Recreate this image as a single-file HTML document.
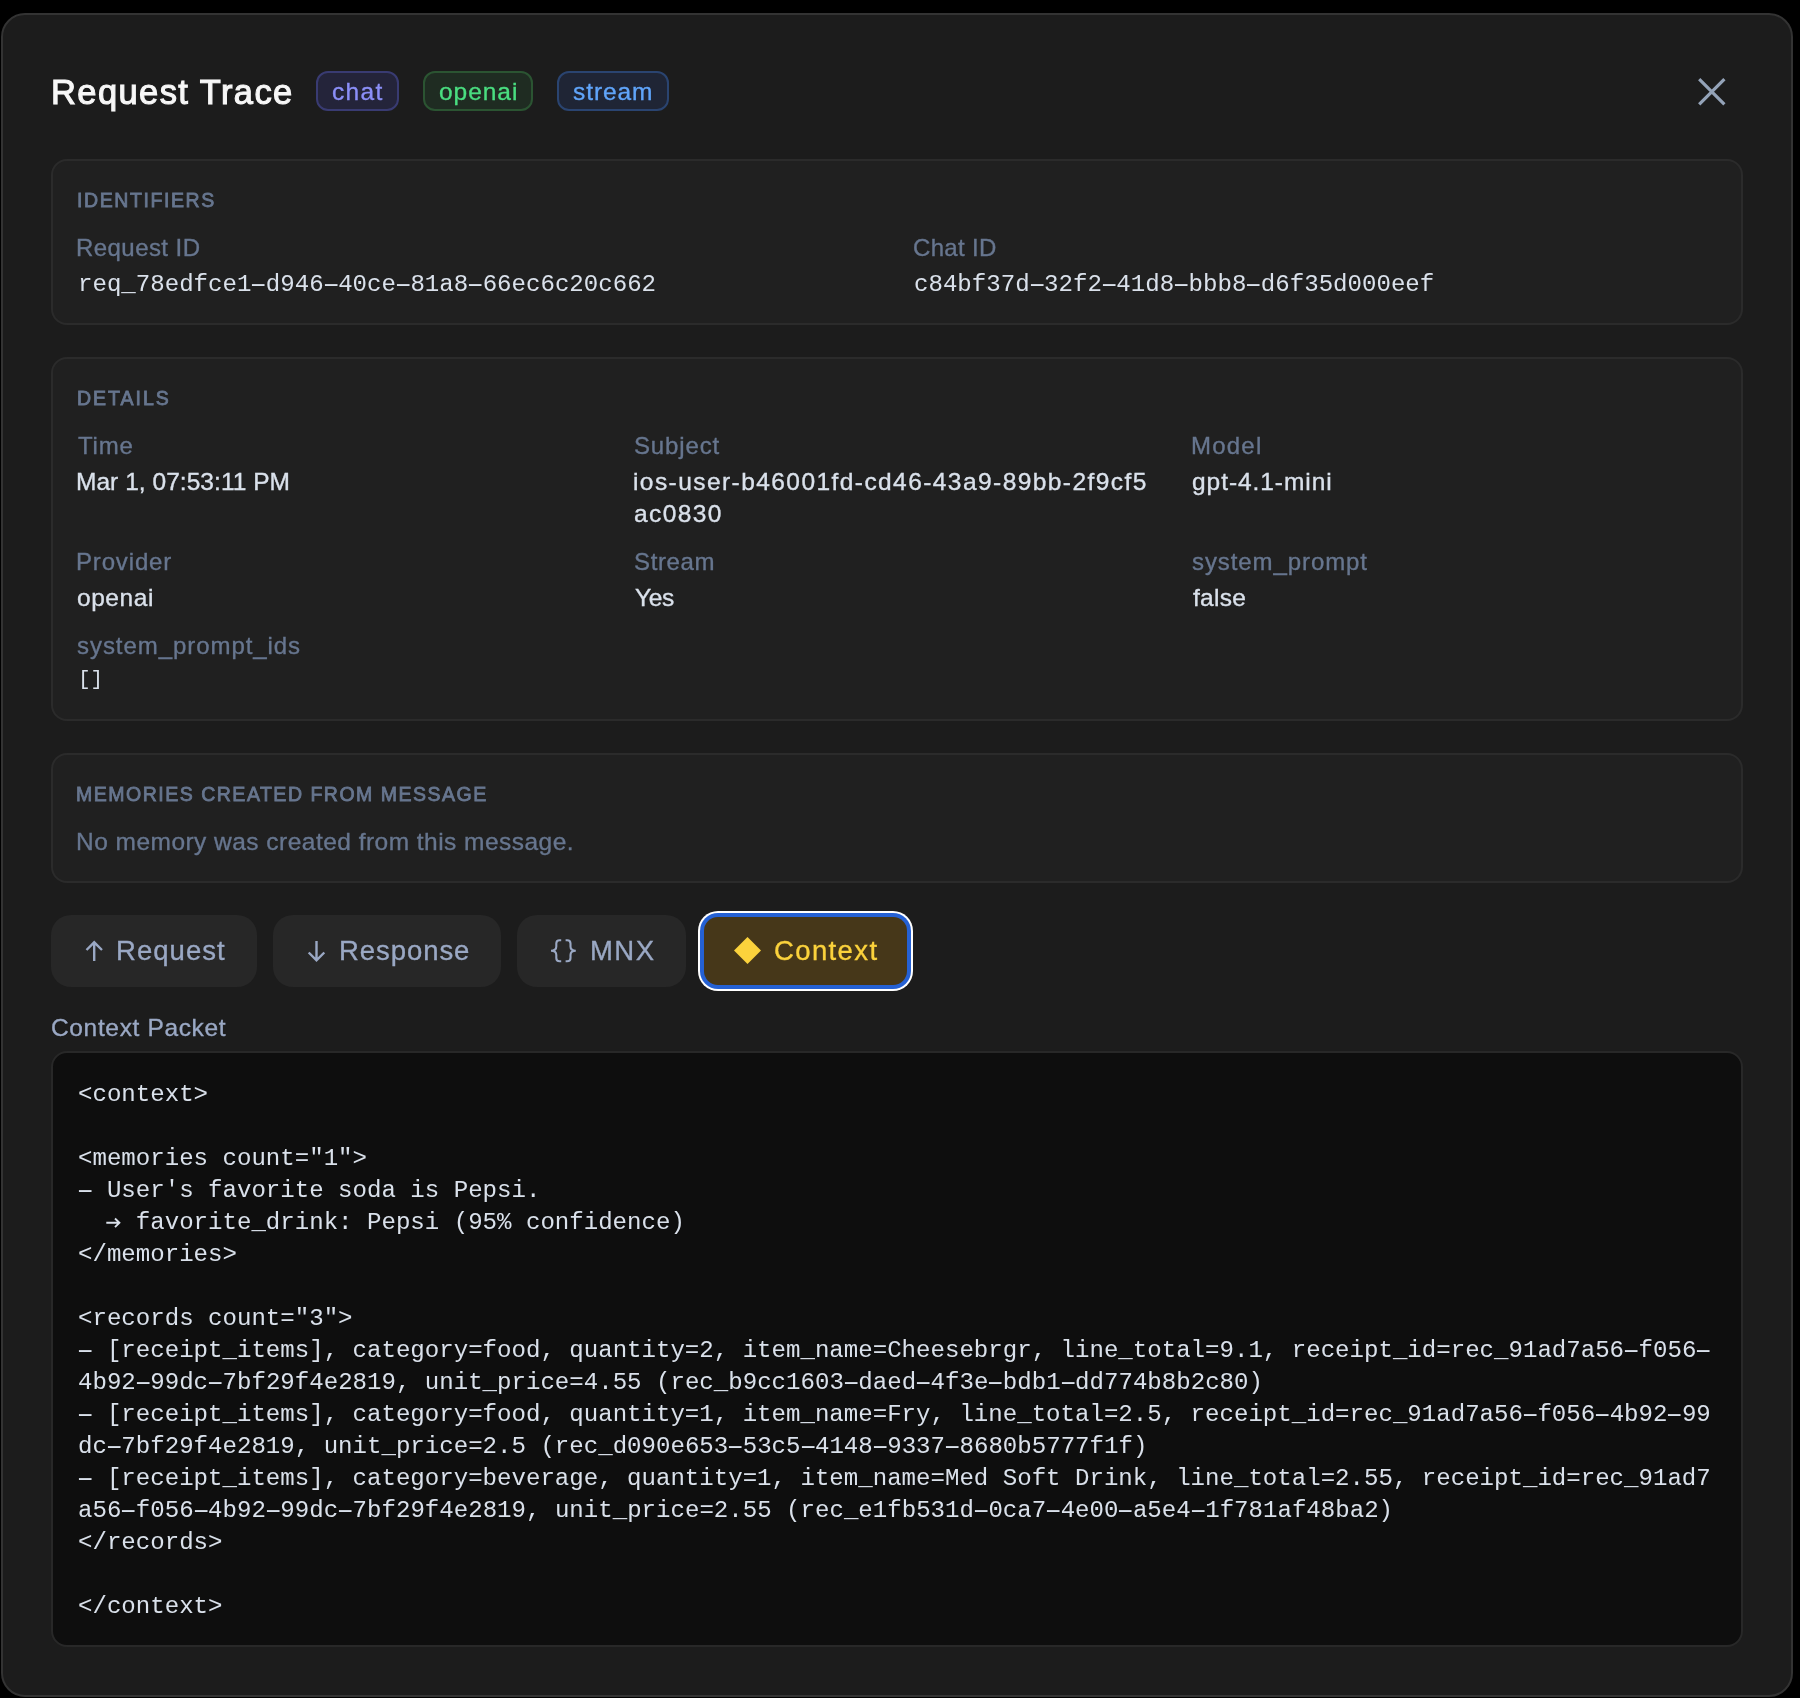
<!DOCTYPE html>
<html><head><meta charset="utf-8"><title>Request Trace</title>
<style>
html,body{margin:0;padding:0;}
body{width:1800px;height:1698px;background:#000;position:relative;overflow:hidden;font-family:"Liberation Sans", sans-serif;}
.t{position:absolute;white-space:pre;will-change:transform;}
.box{position:absolute;box-sizing:border-box;}
.h{display:inline-block;transform:scaleX(1.9);}
</style></head><body>
<div class="box" style="left:1px;top:13px;width:1792px;height:1684px;border:2px solid #333;border-radius:24px;background:#1c1c1c;"></div>
<div class="t" style="left:51.400000000000006px;top:68.04px;font-size:34.5px;line-height:48px;color:#f7f7f7;font-family:'Liberation Sans', sans-serif;letter-spacing:1.41px;-webkit-text-stroke:1.1px #f7f7f7;">Request Trace</div>
<div class="box" style="left:316px;top:71px;width:83px;height:40px;border:2px solid #393b72;background:#24243a;border-radius:12px;"></div>
<div class="t" style="left:332.0px;top:74.51px;font-size:24.5px;line-height:34px;color:#8b8ff8;font-family:'Liberation Sans', sans-serif;-webkit-text-stroke:0.35px #8b8ff8;letter-spacing:1.37px;">chat</div>
<div class="box" style="left:423px;top:71px;width:110px;height:40px;border:2px solid #2b5432;background:#1f2c22;border-radius:12px;"></div>
<div class="t" style="left:439.0px;top:74.51px;font-size:24.5px;line-height:34px;color:#4ade80;font-family:'Liberation Sans', sans-serif;-webkit-text-stroke:0.35px #4ade80;letter-spacing:0.96px;">openai</div>
<div class="box" style="left:557px;top:71px;width:112px;height:40px;border:2px solid #2a4470;background:#1f2535;border-radius:12px;"></div>
<div class="t" style="left:573.1999999999999px;top:74.51px;font-size:24.5px;line-height:34px;color:#60a5fa;font-family:'Liberation Sans', sans-serif;-webkit-text-stroke:0.35px #60a5fa;letter-spacing:0.92px;">stream</div>
<svg class="box" style="left:1690px;top:70px" width="44" height="44" viewBox="1690 70 44 44"><path d="M1699.2 79.2L1724.4 104.4M1724.4 79.2L1699.2 104.4" stroke="#94a3b8" stroke-width="3.2" fill="none"/></svg>
<div class="box" style="left:51px;top:159px;width:1692px;height:166px;border:2px solid #2b2b2b;background:#202020;border-radius:16px;"></div>
<div class="t" style="left:76.5px;top:186.74px;font-size:19.5px;line-height:27px;color:#67768f;font-family:'Liberation Sans', sans-serif;letter-spacing:1.58px;-webkit-text-stroke:0.8px #67768f;">IDENTIFIERS</div>
<div class="t" style="left:76.39999999999999px;top:230.68px;font-size:24px;line-height:34px;color:#67768f;font-family:'Liberation Sans', sans-serif;-webkit-text-stroke:0.35px #67768f;letter-spacing:0.44px;">Request ID</div>
<div class="t" style="left:78px;top:267.59px;font-size:24.08px;line-height:34px;color:#dae1eb;font-family:'Liberation Mono', monospace;">req_78edfce1<span class="h">-</span>d946<span class="h">-</span>40ce<span class="h">-</span>81a8<span class="h">-</span>66ec6c20c662</div>
<div class="t" style="left:913.1999999999999px;top:230.68px;font-size:24px;line-height:34px;color:#67768f;font-family:'Liberation Sans', sans-serif;-webkit-text-stroke:0.35px #67768f;letter-spacing:0.33px;">Chat ID</div>
<div class="t" style="left:914px;top:267.59px;font-size:24.08px;line-height:34px;color:#dae1eb;font-family:'Liberation Mono', monospace;">c84bf37d<span class="h">-</span>32f2<span class="h">-</span>41d8<span class="h">-</span>bbb8<span class="h">-</span>d6f35d000eef</div>
<div class="box" style="left:51px;top:357px;width:1692px;height:364px;border:2px solid #2b2b2b;background:#202020;border-radius:16px;"></div>
<div class="t" style="left:76.7px;top:384.74px;font-size:19.5px;line-height:27px;color:#67768f;font-family:'Liberation Sans', sans-serif;letter-spacing:1.98px;-webkit-text-stroke:0.8px #67768f;">DETAILS</div>
<div class="t" style="left:77.5px;top:428.68px;font-size:24px;line-height:34px;color:#67768f;font-family:'Liberation Sans', sans-serif;-webkit-text-stroke:0.35px #67768f;letter-spacing:0.8px;">Time</div>
<div class="t" style="left:76.0px;top:464.51px;font-size:24.5px;line-height:34px;color:#dae1eb;font-family:'Liberation Sans', sans-serif;-webkit-text-stroke:0.35px #dae1eb;letter-spacing:0.04px;">Mar 1, 07:53:11 PM</div>
<div class="t" style="left:634.0px;top:428.68px;font-size:24px;line-height:34px;color:#67768f;font-family:'Liberation Sans', sans-serif;-webkit-text-stroke:0.35px #67768f;letter-spacing:0.85px;">Subject</div>
<div class="t" style="left:633.4px;top:464.51px;font-size:24.5px;line-height:34px;color:#dae1eb;font-family:'Liberation Sans', sans-serif;-webkit-text-stroke:0.35px #dae1eb;letter-spacing:1.43px;">ios-user-b46001fd-cd46-43a9-89bb-2f9cf5</div>
<div class="t" style="left:634.0px;top:496.51px;font-size:24.5px;line-height:34px;color:#dae1eb;font-family:'Liberation Sans', sans-serif;-webkit-text-stroke:0.35px #dae1eb;letter-spacing:1.4px;">ac0830</div>
<div class="t" style="left:1191.1px;top:428.68px;font-size:24px;line-height:34px;color:#67768f;font-family:'Liberation Sans', sans-serif;-webkit-text-stroke:0.35px #67768f;letter-spacing:1.22px;">Model</div>
<div class="t" style="left:1192.0px;top:464.51px;font-size:24.5px;line-height:34px;color:#dae1eb;font-family:'Liberation Sans', sans-serif;-webkit-text-stroke:0.35px #dae1eb;letter-spacing:0.94px;">gpt-4.1-mini</div>
<div class="t" style="left:76.1px;top:544.68px;font-size:24px;line-height:34px;color:#67768f;font-family:'Liberation Sans', sans-serif;-webkit-text-stroke:0.35px #67768f;letter-spacing:0.84px;">Provider</div>
<div class="t" style="left:77.0px;top:580.51px;font-size:24.5px;line-height:34px;color:#dae1eb;font-family:'Liberation Sans', sans-serif;-webkit-text-stroke:0.35px #dae1eb;letter-spacing:0.56px;">openai</div>
<div class="t" style="left:634.0px;top:544.68px;font-size:24px;line-height:34px;color:#67768f;font-family:'Liberation Sans', sans-serif;-webkit-text-stroke:0.35px #67768f;letter-spacing:0.62px;">Stream</div>
<div class="t" style="left:634.5px;top:580.51px;font-size:24.5px;line-height:34px;color:#dae1eb;font-family:'Liberation Sans', sans-serif;-webkit-text-stroke:0.35px #dae1eb;letter-spacing:-0.3px;">Yes</div>
<div class="t" style="left:1192.4px;top:544.68px;font-size:24px;line-height:34px;color:#67768f;font-family:'Liberation Sans', sans-serif;-webkit-text-stroke:0.35px #67768f;letter-spacing:0.91px;">system_prompt</div>
<div class="t" style="left:1192.7px;top:580.51px;font-size:24.5px;line-height:34px;color:#dae1eb;font-family:'Liberation Sans', sans-serif;-webkit-text-stroke:0.35px #dae1eb;letter-spacing:0.25px;">false</div>
<div class="t" style="left:77.4px;top:628.68px;font-size:24px;line-height:34px;color:#67768f;font-family:'Liberation Sans', sans-serif;-webkit-text-stroke:0.35px #67768f;letter-spacing:0.94px;">system_prompt_ids</div>
<div class="t" style="left:78px;top:664.91px;font-size:21px;line-height:29px;color:#dae1eb;font-family:'Liberation Mono', monospace;">[]</div>
<div class="box" style="left:51px;top:753px;width:1692px;height:130px;border:2px solid #2b2b2b;background:#202020;border-radius:16px;"></div>
<div class="t" style="left:76.4px;top:780.74px;font-size:19.5px;line-height:27px;color:#67768f;font-family:'Liberation Sans', sans-serif;letter-spacing:1.51px;-webkit-text-stroke:0.8px #67768f;">MEMORIES CREATED FROM MESSAGE</div>
<div class="t" style="left:76.0px;top:824.91px;font-size:24.5px;line-height:34px;color:#67768f;font-family:'Liberation Sans', sans-serif;-webkit-text-stroke:0.35px #67768f;letter-spacing:0.47px;">No memory was created from this message.</div>
<div class="box" style="left:51px;top:915px;width:206px;height:72px;background:#272727;border-radius:20px;"></div>
<svg class="box" style="left:80px;top:935px" width="30" height="32" viewBox="80 935 30 32"><path d="M94.2 942V961M86.5 950L94.2 942.3L102 950" stroke="#9aa8c4" stroke-width="2.4" fill="none"/></svg>
<div class="t" style="left:116.1px;top:932.47px;font-size:27.5px;line-height:38px;color:#9aa8c4;font-family:'Liberation Sans', sans-serif;-webkit-text-stroke:0.35px #9aa8c4;letter-spacing:1.05px;">Request</div>
<div class="box" style="left:273px;top:915px;width:228px;height:72px;background:#272727;border-radius:20px;"></div>
<svg class="box" style="left:302px;top:935px" width="30" height="32" viewBox="302 935 30 32"><path d="M316.5 941V960M308.7 952.5L316.5 960.3L324.3 952.5" stroke="#9aa8c4" stroke-width="2.4" fill="none"/></svg>
<div class="t" style="left:338.8px;top:932.47px;font-size:27.5px;line-height:38px;color:#9aa8c4;font-family:'Liberation Sans', sans-serif;-webkit-text-stroke:0.35px #9aa8c4;letter-spacing:0.94px;">Response</div>
<div class="box" style="left:517px;top:915px;width:169px;height:72px;background:#272727;border-radius:20px;"></div>
<svg class="box" style="left:545px;top:934px" width="36" height="32" viewBox="545 934 36 32"><path d="M561.2 940.2H559.6C557.3 940.2 556.3 941.3 556.3 943.5V946.5C556.3 949.3 554.6 950.7 551 950.7C554.6 950.7 556.3 952.1 556.3 954.9V957.9C556.3 960.1 557.3 961.2 559.6 961.2H561.2M565.6 940.2H567.2C569.5 940.2 570.5 941.3 570.5 943.5V946.5C570.5 949.3 572.2 950.7 575.8 950.7C572.2 950.7 570.5 952.1 570.5 954.9V957.9C570.5 960.1 569.5 961.2 567.2 961.2H565.6" stroke="#9aa8c4" stroke-width="2.1" fill="none"/></svg>
<div class="t" style="left:589.5px;top:932.47px;font-size:27.5px;line-height:38px;color:#9aa8c4;font-family:'Liberation Sans', sans-serif;-webkit-text-stroke:0.35px #9aa8c4;letter-spacing:1.45px;">MNX</div>
<div class="box" style="left:704px;top:917px;width:203px;height:68px;background:#463719;border-radius:14px;box-shadow:0 0 0 4px #2561d4,0 0 0 6px #fff;"></div>
<svg class="box" style="left:730px;top:933px" width="36" height="36" viewBox="730 933 36 36"><path d="M747.5 937L761 950.5L747.5 964L734 950.5Z" fill="#fbd23c"/></svg>
<div class="t" style="left:773.6px;top:932.47px;font-size:27.5px;line-height:38px;color:#fbd23c;font-family:'Liberation Sans', sans-serif;-webkit-text-stroke:0.35px #fbd23c;letter-spacing:1.38px;">Context</div>
<div class="t" style="left:50.8px;top:1010.71px;font-size:24.5px;line-height:34px;color:#9aa8c4;font-family:'Liberation Sans', sans-serif;-webkit-text-stroke:0.35px #9aa8c4;letter-spacing:0.65px;">Context Packet</div>
<div class="box" style="left:51px;top:1051px;width:1692px;height:596px;border:2px solid #282828;background:#0e0e0e;border-radius:16px;"></div>
<div class="t" style="left:77.5px;top:1077.59px;font-size:24.08px;line-height:34px;color:#dae1eb;font-family:'Liberation Mono', monospace;">&lt;context&gt;</div>
<div class="t" style="left:77.5px;top:1141.59px;font-size:24.08px;line-height:34px;color:#dae1eb;font-family:'Liberation Mono', monospace;">&lt;memories count=&quot;1&quot;&gt;</div>
<div class="t" style="left:77.5px;top:1173.59px;font-size:24.08px;line-height:34px;color:#dae1eb;font-family:'Liberation Mono', monospace;"><span class="h">-</span> User&#x27;s favorite soda is Pepsi.</div>
<div class="t" style="left:77.5px;top:1205.59px;font-size:24.08px;line-height:34px;color:#dae1eb;font-family:'Liberation Mono', monospace;">    favorite_drink: Pepsi (95% confidence)</div>
<div class="t" style="left:77.5px;top:1237.59px;font-size:24.08px;line-height:34px;color:#dae1eb;font-family:'Liberation Mono', monospace;">&lt;/memories&gt;</div>
<div class="t" style="left:77.5px;top:1301.59px;font-size:24.08px;line-height:34px;color:#dae1eb;font-family:'Liberation Mono', monospace;">&lt;records count=&quot;3&quot;&gt;</div>
<div class="t" style="left:77.5px;top:1333.59px;font-size:24.08px;line-height:34px;color:#dae1eb;font-family:'Liberation Mono', monospace;"><span class="h">-</span> [receipt_items], category=food, quantity=2, item_name=Cheesebrgr, line_total=9.1, receipt_id=rec_91ad7a56<span class="h">-</span>f056<span class="h">-</span></div>
<div class="t" style="left:77.5px;top:1365.59px;font-size:24.08px;line-height:34px;color:#dae1eb;font-family:'Liberation Mono', monospace;">4b92<span class="h">-</span>99dc<span class="h">-</span>7bf29f4e2819, unit_price=4.55 (rec_b9cc1603<span class="h">-</span>daed<span class="h">-</span>4f3e<span class="h">-</span>bdb1<span class="h">-</span>dd774b8b2c80)</div>
<div class="t" style="left:77.5px;top:1397.59px;font-size:24.08px;line-height:34px;color:#dae1eb;font-family:'Liberation Mono', monospace;"><span class="h">-</span> [receipt_items], category=food, quantity=1, item_name=Fry, line_total=2.5, receipt_id=rec_91ad7a56<span class="h">-</span>f056<span class="h">-</span>4b92<span class="h">-</span>99</div>
<div class="t" style="left:77.5px;top:1429.59px;font-size:24.08px;line-height:34px;color:#dae1eb;font-family:'Liberation Mono', monospace;">dc<span class="h">-</span>7bf29f4e2819, unit_price=2.5 (rec_d090e653<span class="h">-</span>53c5<span class="h">-</span>4148<span class="h">-</span>9337<span class="h">-</span>8680b5777f1f)</div>
<div class="t" style="left:77.5px;top:1461.59px;font-size:24.08px;line-height:34px;color:#dae1eb;font-family:'Liberation Mono', monospace;"><span class="h">-</span> [receipt_items], category=beverage, quantity=1, item_name=Med Soft Drink, line_total=2.55, receipt_id=rec_91ad7</div>
<div class="t" style="left:77.5px;top:1493.59px;font-size:24.08px;line-height:34px;color:#dae1eb;font-family:'Liberation Mono', monospace;">a56<span class="h">-</span>f056<span class="h">-</span>4b92<span class="h">-</span>99dc<span class="h">-</span>7bf29f4e2819, unit_price=2.55 (rec_e1fb531d<span class="h">-</span>0ca7<span class="h">-</span>4e00<span class="h">-</span>a5e4<span class="h">-</span>1f781af48ba2)</div>
<div class="t" style="left:77.5px;top:1525.59px;font-size:24.08px;line-height:34px;color:#dae1eb;font-family:'Liberation Mono', monospace;">&lt;/records&gt;</div>
<div class="t" style="left:77.5px;top:1589.59px;font-size:24.08px;line-height:34px;color:#dae1eb;font-family:'Liberation Mono', monospace;">&lt;/context&gt;</div>
<svg class="box" style="left:100px;top:1210px" width="30" height="26" viewBox="100 1210 30 26"><path d="M106.3 1222.8H119.3M115 1218.5L119.4 1222.8L115 1227.1" stroke="#dae1eb" stroke-width="1.9" fill="none"/></svg>
</body></html>
